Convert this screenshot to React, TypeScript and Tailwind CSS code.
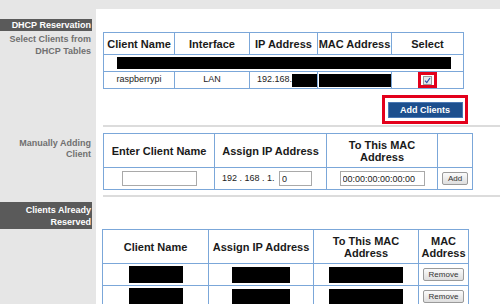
import React from 'react';

const cell = 'border border-[#7ba7d9] p-0 text-center align-middle';
const head = `${cell} text-[11px] font-bold text-[#1a1a1a] leading-[12px]`;
const body = `${cell} text-[9px] text-[#222]`;

function Black({ w, h }: { w: string; h: string }) {
  return <div className={`inline-block align-middle bg-black ${w} ${h}`} />;
}

function GrayButton({ label, w }: { label: string; w: string }) {
  return (
    <button
      className={`${w} h-[13px] rounded-[2px] border border-[#9a9a9a] bg-gradient-to-b from-[#fbfbfb] to-[#dedede] text-[8px] leading-[11px] text-[#333] align-middle`}
    >
      {label}
    </button>
  );
}

function SideLabel({ children, className = '' }: { children: React.ReactNode; className?: string }) {
  return (
    <div className={`pr-[5px] text-right text-[9px] font-bold leading-[11px] text-[#707070] ${className}`}>
      {children}
    </div>
  );
}

function DarkBar({ children, className = '' }: { children: React.ReactNode; className?: string }) {
  return (
    <div className={`w-[92px] bg-[#5a5a5a] pr-[1px] text-right text-[9px] font-bold leading-[12px] text-white ${className}`}>
      {children}
    </div>
  );
}

function Separator() {
  return <div className="h-[2px] w-[397px] bg-[#dcdcdc]" />;
}

export default function App() {
  return (
    <div
      className="relative h-[304px] w-[503px] overflow-hidden bg-white"
      style={{ fontFamily: '"Liberation Sans", Arial, sans-serif' }}
    >
      <div className="flex">
        <div className="h-[9px] w-[500px] bg-[#e6e6e6]" />
      </div>

      {/* DHCP Reservation */}
      <div className="flex">
        <div className="w-[96px] shrink-0 bg-[#e6e6e6] pt-[10px]">
          <DarkBar className="h-[12px]">DHCP Reservation</DarkBar>
          <SideLabel className="pt-[2px] leading-[12px]">
            Select Clients from
            <br />
            DHCP Tables
          </SideLabel>
        </div>
        <div className="flex-1 pl-[7px] pt-[23px]">
          <table className="w-[360px] table-fixed border-collapse">
            <colgroup>
              <col className="w-[71px]" />
              <col className="w-[75px]" />
              <col className="w-[68px]" />
              <col className="w-[74px]" />
              <col className="w-[72px]" />
            </colgroup>
            <tbody>
              <tr className="h-[22px]">
                <th className={head}>Client Name</th>
                <th className={head}>Interface</th>
                <th className={head}>IP Address</th>
                <th className={head}>MAC Address</th>
                <th className={head}>Select</th>
              </tr>
              <tr className="h-[17px]">
                <td className={cell} colSpan={5}>
                  <div className="mx-auto h-[12px] w-[334px] bg-black" />
                </td>
              </tr>
              <tr className="h-[17px]">
                <td className={body}>raspberrypi</td>
                <td className={body}>LAN</td>
                <td className={`${body} text-left`}>
                  <div className="flex items-center pl-[7px]">
                    <span>192.168.</span>
                    <div className="h-[13px] w-[25px] bg-black" />
                  </div>
                </td>
                <td className={body}>
                  <div className="mx-auto h-[13px] w-[72px] bg-black" />
                </td>
                <td className={body}>
                  <div className="mx-auto flex h-[16px] w-[19px] items-center justify-center border-[3px] border-[#e3001b]">
                    <div className="flex h-[9px] w-[9px] items-center justify-center border border-[#9a9a9a] bg-[#e4e7ee]">
                      <svg width="7" height="7" viewBox="0 0 7 7">
                        <path d="M1 3.6 L2.8 5.6 L6 1" fill="none" stroke="#2a4fa6" strokeWidth="1.2" />
                      </svg>
                    </div>
                  </div>
                </td>
              </tr>
            </tbody>
          </table>

          <div className="mt-[6px] flex w-[365px] justify-end">
            <div className="flex h-[29px] w-[86px] items-center justify-center border-[3px] border-[#e3001b]">
              <button className="h-[16px] w-[75px] border border-[#4a78b4] bg-[#1d4f8e] text-[9px] font-bold leading-[14px] text-white">
                Add Clients
              </button>
            </div>
          </div>
          <div className="mt-[1px]">
            <Separator />
          </div>
        </div>
      </div>

      {/* Manually Adding Client */}
      <div className="flex">
        <div className="w-[96px] shrink-0 bg-[#e6e6e6] pt-[11px]">
          <SideLabel>
            Manually Adding
            <br />
            Client
          </SideLabel>
        </div>
        <div className="flex-1 pl-[7px] pt-[6px]">
          <table className="w-[369px] table-fixed border-collapse">
            <colgroup>
              <col className="w-[111px]" />
              <col className="w-[112px]" />
              <col className="w-[111px]" />
              <col className="w-[35px]" />
            </colgroup>
            <tbody>
              <tr className="h-[34px]">
                <th className={head}>Enter Client Name</th>
                <th className={head}>Assign IP Address</th>
                <th className={head}>
                  To This MAC
                  <br />
                  Address
                </th>
                <th className={head}></th>
              </tr>
              <tr className="h-[22px]">
                <td className={body}>
                  <input className="h-[15px] w-[75px] border border-[#a9a9a9] bg-white align-middle" />
                </td>
                <td className={`${body} text-left`}>
                  <div className="flex items-center pl-[7px]">
                    <span className="whitespace-pre">192 . 168 . 1. </span>
                    <input
                      defaultValue="0"
                      className="ml-[2px] h-[15px] w-[33px] border border-[#a9a9a9] bg-white pl-[2px] text-[9px] text-[#222]"
                    />
                  </div>
                </td>
                <td className={body}>
                  <input
                    defaultValue="00:00:00:00:00:00"
                    className="h-[15px] w-[85px] border border-[#a9a9a9] bg-white pl-[2px] text-[9px] text-[#222] align-middle"
                  />
                </td>
                <td className={body}>
                  <GrayButton label="Add" w="w-[26px]" />
                </td>
              </tr>
            </tbody>
          </table>
          <div className="mt-[5px]">
            <Separator />
          </div>
        </div>
      </div>

      {/* Clients Already Reserved */}
      <div className="flex">
        <div className="h-[120px] w-[96px] shrink-0 bg-[#e6e6e6] pt-[5px]">
          <DarkBar className="h-[27px] pt-[2px]">
            Clients Already
            <br />
            Reserved
          </DarkBar>
        </div>
        <div className="flex-1 pl-[6px] pt-[32px]">
          <table className="w-[366px] table-fixed border-collapse">
            <colgroup>
              <col className="w-[106px]" />
              <col className="w-[105px]" />
              <col className="w-[105px]" />
              <col className="w-[50px]" />
            </colgroup>
            <tbody>
              <tr className="h-[34px]">
                <th className={head}>Client Name</th>
                <th className={head}>Assign IP Address</th>
                <th className={head}>
                  To This MAC
                  <br />
                  Address
                </th>
                <th className={head}>
                  MAC
                  <br />
                  Address
                </th>
              </tr>
              {[0, 1].map((i) => (
                <tr key={i} className="h-[22px]">
                  <td className={body}>
                    <Black w="w-[54px]" h="h-[17px]" />
                  </td>
                  <td className={body}>
                    <Black w="w-[58px]" h="h-[16px]" />
                  </td>
                  <td className={body}>
                    <Black w="w-[74px]" h="h-[16px]" />
                  </td>
                  <td className={body}>
                    <GrayButton label="Remove" w="w-[41px]" />
                  </td>
                </tr>
              ))}
            </tbody>
          </table>
        </div>
      </div>
    </div>
  );
}
